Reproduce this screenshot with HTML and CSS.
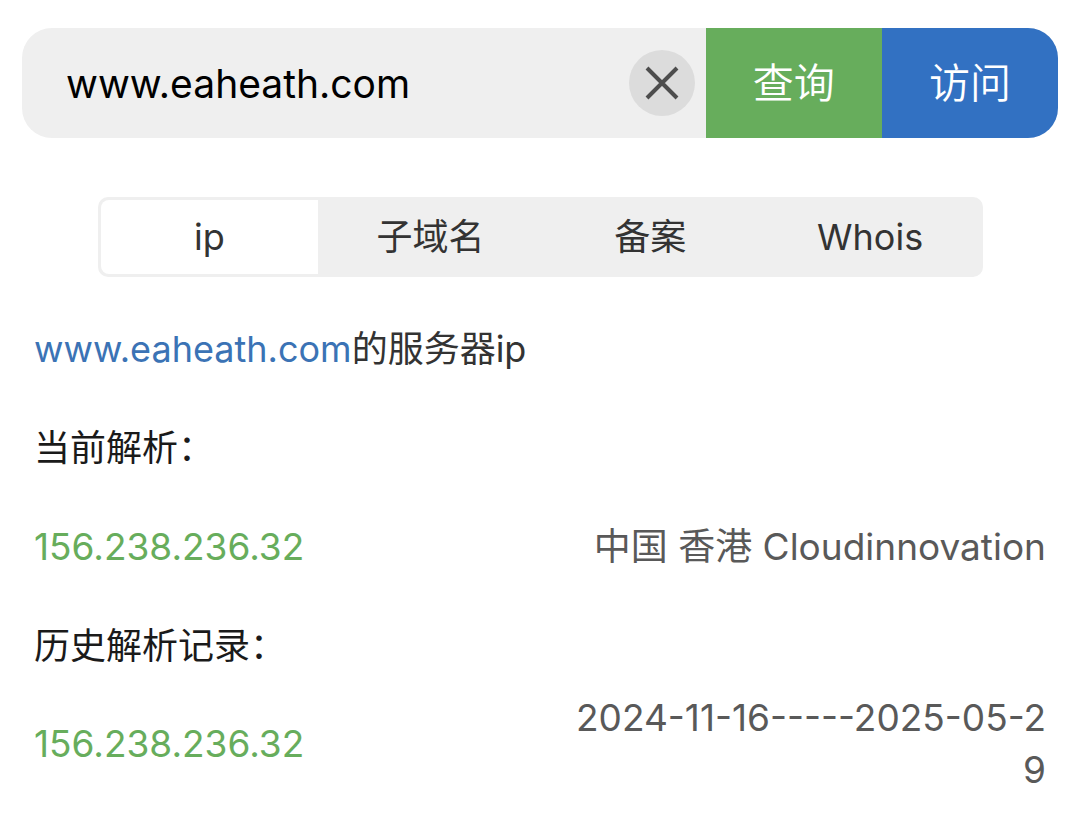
FILE: index.html
```
<!DOCTYPE html>
<html lang="zh-CN">
<head>
<meta charset="utf-8">
<meta name="viewport" content="width=device-width, initial-scale=1">
<title>www.eaheath.com</title>
<link rel="stylesheet" href="styles.css">
</head>
<body>
<form class="search">
  <input class="search-input" type="text" value="www.eaheath.com" aria-label="域名" spellcheck="false">
  <button class="clear" type="button" aria-label="清除">
    <svg class="clear-icon" viewBox="0 0 34 34" aria-hidden="true"><path d="M2 2 L32 32 M32 2 L2 32"/></svg>
  </button>
  <button class="action query" type="submit">查询</button>
  <button class="action visit" type="button">访问</button>
</form>
<nav class="tabs">
  <button class="tab active" type="button">ip</button>
  <button class="tab" type="button">子域名</button>
  <button class="tab" type="button">备案</button>
  <button class="tab" type="button">Whois</button>
</nav>
<main class="result">
  <p class="title"><a class="domain" href="#">www.eaheath.com</a>的服务器ip</p>
  <section class="group">
    <h2 class="heading">当前解析：</h2>
    <div class="record">
      <a class="ip" href="#">156.238.236.32</a>
      <span class="detail">中国 香港 Cloudinnovation</span>
    </div>
  </section>
  <section class="group history">
    <h2 class="heading">历史解析记录：</h2>
    <div class="record">
      <a class="ip" href="#">156.238.236.32</a>
      <span class="detail date">2024-11-16-----2025-05-29</span>
    </div>
  </section>
</main>
</body>
</html>
```
FILE: styles.css
```
* { box-sizing: border-box; }

body {
  margin: 0;
  padding: 28px 22px;
  background: #fff;
  color: #333;
  font-family: Inter, "Noto Sans CJK SC", sans-serif;
  font-size: 36px;
  line-height: 52px;
}

button {
  border: 0;
  padding: 0;
  font: inherit;
  color: inherit;
  cursor: pointer;
}

a { text-decoration: none; }

.search {
  display: flex;
  align-items: center;
  height: 110px;
  border-radius: 30px;
  overflow: hidden;
  background: #efefef;
}

.search-input {
  flex: 1;
  min-width: 0;
  height: 100%;
  padding: 0 0 0 44px;
  border: 0;
  outline: 0;
  background: transparent;
  color: #000;
  font: inherit;
  font-size: 39px;
}

.clear {
  display: flex;
  align-items: center;
  justify-content: center;
  flex: none;
  width: 66px;
  height: 66px;
  margin-right: 11px;
  border-radius: 50%;
  background: #dcdcdc;
}

.clear-icon {
  width: 34px;
  height: 34px;
  fill: none;
  stroke: #4d4d4d;
  stroke-width: 4;
}

.action {
  flex: none;
  width: 17%;
  height: 100%;
  color: #fff;
  font-size: 41px;
  font-weight: 350;
}

.query { background: #67ad5c; }
.visit { background: #3271c2; }

.tabs {
  display: grid;
  grid-template-columns: repeat(4, 1fr);
  height: 80px;
  margin: 59px 75px 0 76px;
  padding: 3px;
  border-radius: 10px;
  background: #efefef;
}

.tab {
  border-radius: 8px;
  background: transparent;
}

.tab.active {
  margin-right: 3px;
  border-radius: 8px 0 0 8px;
  background: #fff;
}

.result {
  display: flex;
  flex-direction: column;
  gap: 47px;
  margin-top: 46px;
  padding: 0 12px;
}

.title, .heading { margin: 0; }

.domain { color: #3b73b5; }

.group {
  display: flex;
  flex-direction: column;
  gap: 47px;
}

.history { gap: 20px; }

.heading {
  color: #1a1a1a;
  font-size: 36px;
  font-weight: 400;
}

.record {
  display: grid;
  grid-template-columns: 11fr 10fr;
  align-items: center;
  font-size: 37px;
}

.ip { color: #67ad5c; }

.detail {
  color: #595959;
  text-align: right;
}

.date { word-break: break-all; }
```
